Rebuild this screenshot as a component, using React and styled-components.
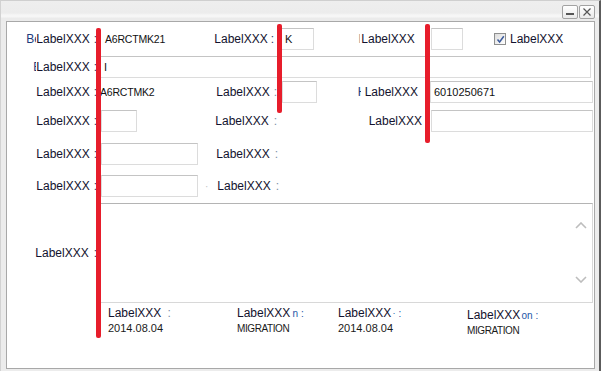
import React from 'react'
import styled, { createGlobalStyle } from 'styled-components'

const Global = createGlobalStyle`
  html, body { margin: 0; padding: 0; background: #ececec; }
  body { font-family: "Liberation Sans", Arial, sans-serif; }
`

const Window = styled.div`
  width: 601px;
  height: 371px;
  box-sizing: border-box;
  display: flex;
  flex-direction: column;
  background: #ececec;
  border-top: 1px solid #cfcfcf;
  border-left: 1px solid #d2d2d2;
  border-right: 2px solid #5c5c5c;
  overflow: hidden;
`

const TitleBar = styled.div`
  height: 20px;
  flex: none;
  display: flex;
  justify-content: flex-end;
  align-items: flex-start;
  gap: 1px;
  padding: 4px 4px 0 0;
  box-sizing: border-box;
  background: linear-gradient(#eeeeee 0, #ececec 12px, #f6f6f6 14px, #f6f6f6 16px, #ebebeb 17px);
`

const TitleButton = styled.button`
  width: 16px;
  height: 14px;
  padding: 0;
  border: 1px solid #a2a2a2;
  border-radius: 2px;
  background: linear-gradient(#ffffff, #e9e9e9);
  display: flex;
  align-items: center;
  justify-content: center;
  color: #555;
`

const Panel = styled.div`
  position: relative;
  margin-left: 5px;
  width: 589px;
  height: 348px;
  box-sizing: border-box;
  background: #fff;
  border: 1px solid #a8a8a8;
  padding-top: 6px;
`

const Form = styled.div`
  display: grid;
  grid-template-columns: 93px 110px 70px 75px 75px 163px;
  grid-template-rows: 28px 25px 29px 33px 32px 28px 100px;
  align-items: start;
`

const LabelCell = styled.div`
  height: ${p => p.$tall ? '100px' : '22px'};
  display: flex;
  align-items: center;
  justify-content: flex-end;
  padding-right: ${p => p.$pad ?? 3}px;
  font-size: 12px;
  color: #12122e;
  white-space: nowrap;
  position: relative;
`

const Ghost = styled.span`
  display: inline-block;
  overflow: hidden;
  width: ${p => p.$w}px;
  margin-right: ${p => p.$gap ?? 0}px;
  color: ${p => p.$color || '#1d3c7c'};
  font-size: 12px;
`

const Colon = styled.span`
  margin-left: ${p => p.$gap ?? 4}px;
  color: ${p => p.$light ? '#7c8fa8' : '#2b3a66'};
`

const ValueCell = styled.div`
  height: 22px;
  display: flex;
  align-items: center;
  gap: ${p => p.$gap ?? 0}px;
  padding-left: ${p => p.$pad ?? 0}px;
  grid-column: ${p => p.$span || 'auto'};
`

const PlainValue = styled.span`
  font-size: 10.5px;
  color: #111;
  letter-spacing: -0.2px;
`

const Input = styled.div`
  width: ${p => p.$w}px;
  height: 22px;
  box-sizing: border-box;
  margin-left: ${p => p.$ml ?? 0}px;
  border: 1px solid #dcdcdc;
  border-top-color: #c4c4c4;
  background: #fff;
  display: flex;
  align-items: center;
  padding-left: 3px;
  font-size: 11px;
  color: #111;
`

const CheckWrap = styled.label`
  display: flex;
  align-items: center;
  gap: 4px;
  margin-left: 31px;
  font-size: 12px;
  color: #12122e;
`

const CheckBox = styled.span`
  width: 12px;
  height: 12px;
  box-sizing: border-box;
  border: 1px solid #8e8f8f;
  background: linear-gradient(135deg, #dcdcdc, #ffffff);
  display: flex;
  align-items: center;
  justify-content: center;
`

const Dot = styled.span`
  color: #c4c4c4;
  font-size: 10px;
  margin-left: 7px;
`

const TextArea = styled.div`
  grid-column: 2 / 7;
  height: 100px;
  width: 493px;
  box-sizing: border-box;
  border: 1px solid #d8d8d8;
  border-top-color: #b4b4b4;
  display: flex;
  justify-content: flex-end;
`

const Scroll = styled.div`
  width: 16px;
  padding: 18px 3px 19px 0;
  display: flex;
  flex-direction: column;
  justify-content: space-between;
  align-items: center;
`

const Info = styled.div`
  display: grid;
  grid-template-columns: 129px 101px 129px 120px;
  padding-left: 101px;
  margin-top: 3px;
`

const InfoItem = styled.div`
  display: flex;
  flex-direction: column;
  gap: 1px;
`

const InfoLabel = styled.div`
  height: 14px;
  display: flex;
  align-items: center;
  font-size: 12px;
  color: #12122e;
  white-space: nowrap;
  margin-top: ${p => p.$dy ?? 0}px;
`

const Tail = styled.span`
  color: #1e56a6;
  font-size: ${p => p.$size ?? 10}px;
  margin-left: ${p => p.$gap ?? 2}px;
`

const InfoValue = styled.div`
  height: 14px;
  display: flex;
  align-items: center;
  font-size: ${p => p.$caps ? '10px' : '11px'};
  letter-spacing: ${p => p.$caps ? '-0.4px' : '0'};
  color: #1a1a1a;
`

const Marker = styled.div`
  position: absolute;
  left: ${p => p.$x}px;
  top: ${p => p.$y}px;
  width: 5px;
  height: ${p => p.$h}px;
  border-radius: 2px;
  background: #e71d2b;
`

const Chevron = ({ up }) => (
  <svg width="12" height="7" viewBox="0 0 12 7">
    <path d={up ? 'M1 6 L6 1 L11 6' : 'M1 1 L6 6 L11 1'} fill="none" stroke="#bdbdbd" strokeWidth="1.6" />
  </svg>
)

const Label = ({ text = 'LabelXXX', colon = true, gap, light, children, ...rest }) => (
  <LabelCell {...rest}>
    {children}
    <span>{text}</span>
    {colon && <Colon $gap={gap} $light={light}>:</Colon>}
  </LabelCell>
)

export default function App() {
  return (
    <>
      <Global />
      <Window>
        <TitleBar>
          <TitleButton aria-label="minimize">
            <svg width="10" height="10" viewBox="0 0 10 10">
              <rect x="1" y="6" width="8" height="2" fill="#555" />
            </svg>
          </TitleButton>
          <TitleButton aria-label="close">
            <svg width="10" height="10" viewBox="0 0 10 10">
              <path d="M1.5 1.5 L8.5 8.5 M8.5 1.5 L1.5 8.5" stroke="#555" strokeWidth="1.2" />
            </svg>
          </TitleButton>
        </TitleBar>
        <Panel>
          <Form>
            {/* row 1 */}
            <Label><Ghost $w={10}>Be</Ghost></Label>
            <ValueCell $pad={5}><PlainValue>A6RCTMK21</PlainValue></ValueCell>
            <Label $pad={6} gap={3}>{null}</Label>
            <ValueCell><Input $w={33} $ml={1}>K</Input></ValueCell>
            <Label $pad={2} gap={10}><Ghost $w={2} $gap={1} $color="#9a9a9a">I</Ghost></Label>
            <ValueCell>
              <Input $w={32} $ml={1} />
              <CheckWrap>
                <CheckBox>
                  <svg width="9" height="9" viewBox="0 0 9 9">
                    <path d="M1.5 4.5 L3.6 7 L7.8 1.2" fill="none" stroke="#3b5b9c" strokeWidth="1.5" />
                  </svg>
                </CheckBox>
                LabelXXX
              </CheckWrap>
            </ValueCell>

            {/* row 2 */}
            <Label><Ghost $w={3}>E</Ghost></Label>
            <ValueCell $span="2 / 7"><Input $w={491}>I</Input></ValueCell>

            {/* row 3 */}
            <Label />
            <ValueCell><PlainValue>A6RCTMK2</PlainValue></ValueCell>
            <Label light />
            <ValueCell><Input $w={35} $ml={2} /></ValueCell>
            <Label colon={false} $pad={12}><Ghost $w={3} $gap={4}>H</Ghost></Label>
            <ValueCell><Input $w={163}>6010250671</Input></ValueCell>

            {/* row 4 */}
            <Label />
            <ValueCell><Input $w={36} $ml={1} /></ValueCell>
            <Label light gap={5} />
            <ValueCell />
            <Label colon={false} $pad={8} />
            <ValueCell><Input $w={162} $ml={1} /></ValueCell>

            {/* row 5 */}
            <Label />
            <ValueCell><Input $w={97} $ml={1} /></ValueCell>
            <Label light gap={5} $pad={2} />
            <ValueCell $span="4 / 7" />

            {/* row 6 */}
            <Label />
            <ValueCell><Input $w={97} $ml={1} /><Dot>·</Dot></ValueCell>
            <Label light gap={5} $pad={1} />
            <ValueCell $span="4 / 7" />

            {/* text area */}
            <Label $tall gap={5} />
            <TextArea>
              <Scroll>
                <Chevron up />
                <Chevron />
              </Scroll>
            </TextArea>
          </Form>

          <Info>
            <InfoItem>
              <InfoLabel>LabelXXX<Colon $gap={6} $light>:</Colon></InfoLabel>
              <InfoValue>2014.08.04</InfoValue>
            </InfoItem>
            <InfoItem>
              <InfoLabel>LabelXXX<Tail>n</Tail><Tail $gap={3}>:</Tail></InfoLabel>
              <InfoValue $caps>MIGRATION</InfoValue>
            </InfoItem>
            <InfoItem>
              <InfoLabel>LabelXXX<Tail $gap={1} $size={9}>·</Tail><Tail $gap={3}>:</Tail></InfoLabel>
              <InfoValue>2014.08.04</InfoValue>
            </InfoItem>
            <InfoItem>
              <InfoLabel $dy={2}>LabelXXX<Tail $gap={1}>on</Tail><Tail $gap={3}>:</Tail></InfoLabel>
              <InfoValue $caps>MIGRATION</InfoValue>
            </InfoItem>
          </Info>

          <Marker $x={89} $y={6} $h={310} />
          <Marker $x={270} $y={2} $h={89} />
          <Marker $x={418} $y={2} $h={119} />
        </Panel>
      </Window>
    </>
  )
}
